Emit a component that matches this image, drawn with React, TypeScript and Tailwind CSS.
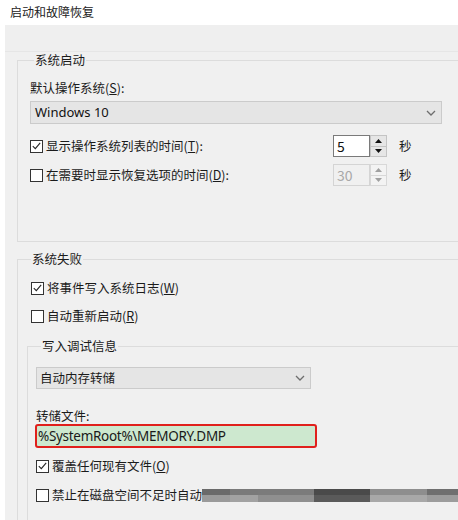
import type { ReactNode } from 'react'

const font = { fontFamily: '"Noto Sans CJK SC", "Noto Sans", sans-serif' }

function Check({ checked, children }: { checked?: boolean; children: ReactNode }) {
  return (
    <div className="flex items-center h-[16px] gap-[3px] text-[12.5px] leading-[16px] text-[#1b1b1b]">
      <span className="w-[13px] h-[13px] border border-[#333] bg-white flex items-center justify-center shrink-0">
        {checked && (
          <svg width="9" height="8" viewBox="0 0 9 8">
            <path d="M0.8 4.2 L3.3 6.6 L8.2 0.9" fill="none" stroke="#222" strokeWidth="1.1" />
          </svg>
        )}
      </span>
      <span className="whitespace-nowrap">{children}</span>
    </div>
  )
}

function Spin({ value, disabled }: { value: string; disabled?: boolean }) {
  const arrow = disabled ? '#a0a0a0' : '#111'
  return (
    <div className="flex h-[22px]">
      <div
        className={
          disabled
            ? 'w-[37px] h-full border border-[#d4d4d4] bg-[#f0f0f0] text-[#a8a8a8] text-[14px] leading-[20px] pl-[3px]'
            : 'w-[37px] h-full border border-[#7a7a7a] bg-white text-[#111] text-[14px] leading-[20px] pl-[3px]'
        }
      >
        {value}
      </div>
      <div className="w-[17px] h-full flex flex-col">
        <div className={disabled ? 'flex-1 border border-[#d8d8d8] bg-[#f3f3f3] flex items-center justify-center' : 'flex-1 border border-[#c4c4c4] bg-[#e6e6e6] flex items-center justify-center'}>
          <svg width="7" height="4" viewBox="0 0 7 4"><path d="M0 4 L3.5 0 L7 4 Z" fill={arrow} /></svg>
        </div>
        <div className={disabled ? 'flex-1 border border-t-0 border-[#d8d8d8] bg-[#f3f3f3] flex items-center justify-center' : 'flex-1 border border-t-0 border-[#c4c4c4] bg-[#e6e6e6] flex items-center justify-center'}>
          <svg width="7" height="4" viewBox="0 0 7 4"><path d="M0 0 L3.5 4 L7 0 Z" fill={arrow} /></svg>
        </div>
      </div>
    </div>
  )
}

function Chevron() {
  return (
    <svg width="10" height="6" viewBox="0 0 10 6">
      <path d="M1 1 L5 5 L9 1" fill="none" stroke="#6e6e6e" strokeWidth="1.3" />
    </svg>
  )
}

// smudged-out tail of the last label
const blur = [
  ['#6a6a6a', '#9a9a9a', 28],
  ['#7a7a7a', '#a2a2a2', 28],
  ['#7b7b7b', '#8f8f8f', 56],
  ['#4a4a4a', '#5a5a5a', 56],
  ['#8e8e8e', '#a8a8a8', 57],
  ['#6f6f6f', '#9c9c9c', 40],
] as const

export default function App() {
  return (
    <div className="w-[458px] h-[520px] bg-white overflow-hidden" style={font}>
      <div className="h-[25px] pl-[10px] pt-[4px] text-[12px] leading-[16px] text-[#222]">启动和故障恢复</div>

      <div className="ml-[5px] h-[495px] bg-[#f0f0f0] overflow-hidden">
        <div className="h-[27px] bg-[#efefef] border-b border-[#e6e6e6]" />

        {/* 系统启动 */}
        <fieldset className="ml-[12px] w-[470px] border border-[#dcdcdc] pl-[12px] pb-[55px]">
          <legend className="ml-[4px] px-[1px] text-[12.5px] leading-[16px] text-[#1b1b1b]">系统启动</legend>
          <div className="mt-[12px] text-[12.5px] leading-[16px] text-[#1b1b1b]">
            默认操作系统(<span className="underline">S</span>):
          </div>
          <div className="mt-[5px] w-[412px] h-[23px] bg-[#e5e5e5] border border-[#cbcbcb] flex items-center justify-between pl-[4px] pr-[5px]">
            <span className="text-[13px] text-[#111]" style={{ fontFamily: '"Noto Sans", sans-serif' }}>Windows 10</span>
            <Chevron />
          </div>
          <div className="mt-[11px] flex items-center h-[22px]">
            <div className="w-[303px]">
              <Check checked>显示操作系统列表的时间(<span className="underline">T</span>):</Check>
            </div>
            <Spin value="5" />
            <span className="ml-[12px] text-[12.5px] text-[#1b1b1b]">秒</span>
          </div>
          <div className="mt-[7px] flex items-center h-[22px]">
            <div className="w-[303px]">
              <Check>在需要时显示恢复选项的时间(<span className="underline">D</span>):</Check>
            </div>
            <Spin value="30" disabled />
            <span className="ml-[12px] text-[12.5px] text-[#1b1b1b]">秒</span>
          </div>
        </fieldset>

        {/* 系统失败 */}
        <fieldset className="mt-[9px] ml-[12px] w-[470px] border border-[#dcdcdc] pl-[9px] pb-[40px]">
          <legend className="ml-[4px] px-[1px] text-[12.5px] leading-[16px] text-[#1b1b1b]">系统失败</legend>
          <div className="mt-[13px] ml-[4px]">
            <Check checked>将事件写入系统日志(<span className="underline">W</span>)</Check>
          </div>
          <div className="mt-[12px] ml-[4px]">
            <Check>自动重新启动(<span className="underline">R</span>)</Check>
          </div>

          {/* 写入调试信息 */}
          <fieldset className="mt-[14px] w-[460px] border border-[#dcdcdc] pl-[8px] pb-[40px]">
            <legend className="ml-[5px] px-[1px] text-[12.5px] leading-[16px] text-[#1b1b1b]">写入调试信息</legend>
            <div className="mt-[13px] w-[275px] h-[22px] bg-[#e5e5e5] border border-[#cbcbcb] flex items-center justify-between pl-[3px] pr-[5px]">
              <span className="text-[12.5px] text-[#1b1b1b]">自动内存转储</span>
              <Chevron />
            </div>
            <div className="mt-[19px] text-[12.5px] leading-[16px] text-[#1b1b1b]">转储文件:</div>
            <div className="w-[282px] h-[24px] -ml-[1px] border-2 border-[#e0201c] rounded-[3px] bg-[#cde8cf] pl-[1px] flex items-center">
              <span className="text-[13.5px] tracking-[-0.3px] text-[#1a1a1a] whitespace-nowrap" style={{ fontFamily: '"Noto Sans", sans-serif' }}>
                %SystemRoot%\MEMORY.DMP
              </span>
            </div>
            <div className="mt-[10px]">
              <Check checked>覆盖任何现有文件(<span className="underline">O</span>)</Check>
            </div>
            <div className="mt-[13px] flex items-center">
              <Check>禁止在磁盘空间不足时自动</Check>
              <div className="flex h-[13px]">
                {blur.map(([top, bottom, w], i) => (
                  <div key={i} className="flex flex-col" style={{ width: w }}>
                    <div className="flex-1" style={{ background: top }} />
                    <div className="flex-1" style={{ background: bottom }} />
                  </div>
                ))}
              </div>
            </div>
          </fieldset>
        </fieldset>
      </div>
    </div>
  )
}
